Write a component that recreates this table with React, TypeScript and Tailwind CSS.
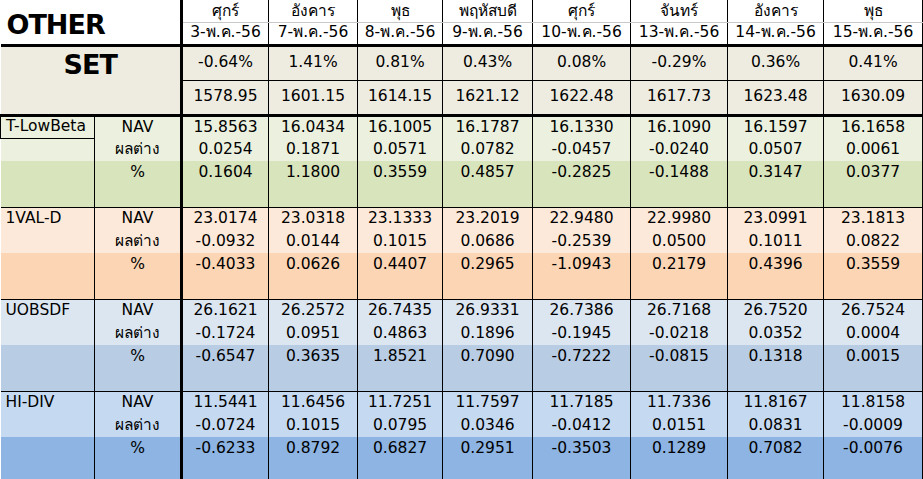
import React from "react"

const COLS = [94, 87, 87, 89, 85, 90, 98, 97, 96, 99]

const DAYS = ["ศุกร์", "อังคาร", "พุธ", "พฤหัสบดี", "ศุกร์", "จันทร์", "อังคาร", "พุธ"]
const DATES = ["3-พ.ค.-56", "7-พ.ค.-56", "8-พ.ค.-56", "9-พ.ค.-56", "10-พ.ค.-56", "13-พ.ค.-56", "14-พ.ค.-56", "15-พ.ค.-56"]
const SET_PCT = ["-0.64%", "1.41%", "0.81%", "0.43%", "0.08%", "-0.29%", "0.36%", "0.41%"]
const SET_IDX = ["1578.95", "1601.15", "1614.15", "1621.12", "1622.48", "1617.73", "1623.48", "1630.09"]

const FUNDS = [
  {
    name: "T-LowBeta", boxed: true,
    light: "bg-[#ebf1de]", dark: "bg-[#d8e4bc]",
    nav: ["15.8563", "16.0434", "16.1005", "16.1787", "16.1330", "16.1090", "16.1597", "16.1658"],
    diff: ["0.0254", "0.1871", "0.0571", "0.0782", "-0.0457", "-0.0240", "0.0507", "0.0061"],
    pct: ["0.1604", "1.1800", "0.3559", "0.4857", "-0.2825", "-0.1488", "0.3147", "0.0377"],
  },
  {
    name: "1VAL-D", boxed: false,
    light: "bg-[#fde9d9]", dark: "bg-[#fcd5b4]",
    nav: ["23.0174", "23.0318", "23.1333", "23.2019", "22.9480", "22.9980", "23.0991", "23.1813"],
    diff: ["-0.0932", "0.0144", "0.1015", "0.0686", "-0.2539", "0.0500", "0.1011", "0.0822"],
    pct: ["-0.4033", "0.0626", "0.4407", "0.2965", "-1.0943", "0.2179", "0.4396", "0.3559"],
  },
  {
    name: "UOBSDF", boxed: false,
    light: "bg-[#dce6f1]", dark: "bg-[#b8cce4]",
    nav: ["26.1621", "26.2572", "26.7435", "26.9331", "26.7386", "26.7168", "26.7520", "26.7524"],
    diff: ["-0.1724", "0.0951", "0.4863", "0.1896", "-0.1945", "-0.0218", "0.0352", "0.0004"],
    pct: ["-0.6547", "0.3635", "1.8521", "0.7090", "-0.7222", "-0.0815", "0.1318", "0.0015"],
  },
  {
    name: "HI-DIV", boxed: false,
    light: "bg-[#c5d9f1]", dark: "bg-[#8db4e2]",
    nav: ["11.5441", "11.6456", "11.7251", "11.7597", "11.7185", "11.7336", "11.8167", "11.8158"],
    diff: ["-0.0724", "0.1015", "0.0795", "0.0346", "-0.0412", "0.0151", "0.0831", "-0.0009"],
    pct: ["-0.6233", "0.8792", "0.6827", "0.2951", "-0.3503", "0.1289", "0.7082", "-0.0076"],
  },
]

const cell = "p-0 text-center align-middle whitespace-nowrap"

export default function App() {
  return (
    <div className="w-[923px] h-[479px] overflow-hidden bg-white text-black text-[15.5px] leading-none font-['DejaVu_Sans',Tahoma,sans-serif]">
      <table className="table-fixed border-collapse w-[922px]">
        <colgroup>
          {COLS.map((w, i) => <col key={i} style={{ width: w }} />)}
        </colgroup>
        <tbody>
          <tr className="h-[22px]">
            <td colSpan={2} rowSpan={2} className="p-0 pl-[6px] pt-[5px] text-left align-middle border-b-[3px] border-r-[3px] border-black">
              <span className="text-[27px] font-bold tracking-[-1px]">OTHER</span>
            </td>
            {DAYS.map((d, i) => (
              <td key={i} className={`${cell} border-l border-r border-black border-b border-b-[#c8c8c8] pt-[1px]`}>{d}</td>
            ))}
          </tr>
          <tr className="h-[23px]">
            {DATES.map((d, i) => (
              <td key={i} className={`${cell} border-l border-r border-black border-b-[3px]`}>{d}</td>
            ))}
          </tr>
          <tr className="h-[35px] bg-[#eeece1]">
            <td colSpan={2} rowSpan={2} className="p-0 pt-[4px] text-center align-top border-r-[3px] border-b-[3px] border-black">
              <span className="text-[27px] font-bold tracking-[-1px]">SET</span>
            </td>
            {SET_PCT.map((v, i) => (
              <td key={i} className={`${cell} border border-black`}>{v}</td>
            ))}
          </tr>
          <tr className="h-[35px] bg-[#eeece1]">
            {SET_IDX.map((v, i) => (
              <td key={i} className={`${cell} border-l border-r border-black border-b-[3px]`}>{v}</td>
            ))}
          </tr>
          {FUNDS.map((f, gi) =>
            [
              { label: "NAV", vals: f.nav, bg: f.light },
              { label: "ผลต่าง", vals: f.diff, bg: f.light },
              { label: "%", vals: f.pct, bg: f.dark },
              { label: "", vals: f.pct.map(() => ""), bg: f.dark },
            ].map((r, ri) => (
              <tr key={`${gi}-${ri}`} className={`h-[23px] ${r.bg}`}>
                <td
                  className={`p-0 pl-[5px] text-left align-middle whitespace-nowrap border-r border-black ${
                    ri === 0 ? (gi === 0 ? "border-t-[3px]" : "border-t") : ""
                  } ${f.boxed && ri === 0 ? "border-b border-l" : ""}`}
                >
                  {ri === 0 ? f.name : ""}
                </td>
                <td className={`${cell} border-r-[3px] border-black ${ri === 0 ? (gi === 0 ? "border-t-[3px]" : "border-t") : ""}`}>
                  {r.label}
                </td>
                {r.vals.map((v, i) => (
                  <td
                    key={i}
                    className={`${cell} border-l border-r border-black ${ri === 0 ? (gi === 0 ? "border-t-[3px]" : "border-t") : ""}`}
                  >
                    {v}
                  </td>
                ))}
              </tr>
            ))
          )}
        </tbody>
      </table>
    </div>
  )
}
